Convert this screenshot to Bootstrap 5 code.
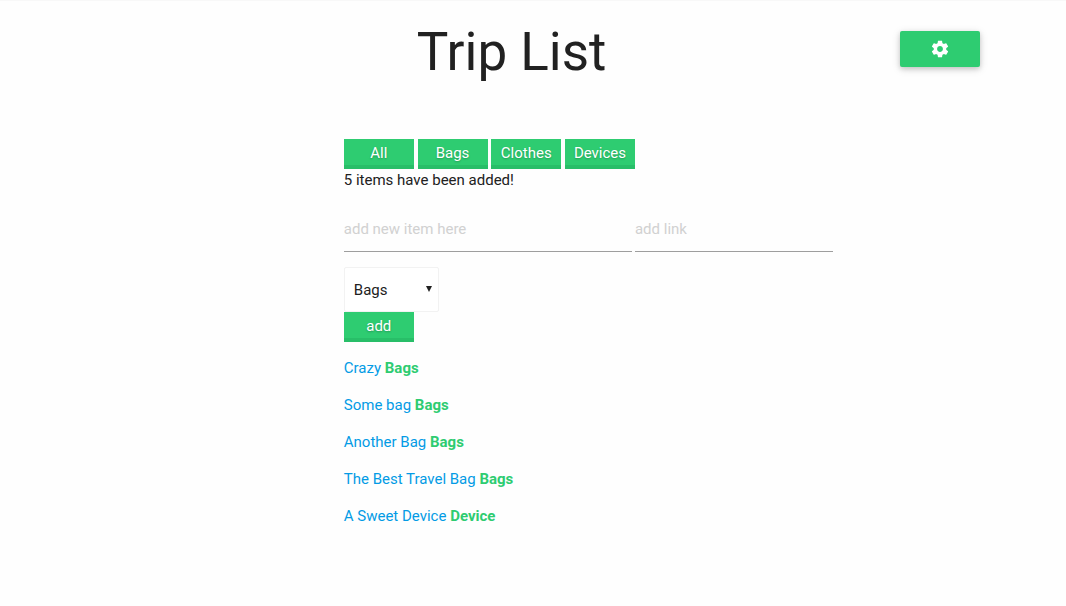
<!DOCTYPE html>
<html lang="en">
<head>
<meta charset="utf-8">
<meta name="viewport" content="width=device-width, initial-scale=1">
<title>Trip List</title>
<link href="https://cdn.jsdelivr.net/npm/bootstrap@5.3.0/dist/css/bootstrap.min.css" rel="stylesheet">
<style>
  body { font: 400 15px/22px Roboto, sans-serif; color: #212121; background: #fefefe; border-top: 1px solid #f8f8f8; }
  .page-header { padding: 21px 8.1% 0 11.6%; }
  .page-title { font-size: 53px; line-height: 60px; font-weight: 400; }
  .settings-btn {
    width: 80px; height: 36px; margin-top: 9px; border-radius: 2px; background: #2ecc71; color: #fff;
    box-shadow: 0 2px 5px 0 rgba(0,0,0,.16), 0 2px 10px 0 rgba(0,0,0,.12);
  }
  .trip-main { width: 45.9%; min-width: 300px; margin-left: 32.25%; margin-top: 57px; }
  .flat-btn {
    width: 70px; height: 30px; padding: 0 0 2px; border: 0; border-radius: 0; vertical-align: top;
    font-size: 15px; line-height: 28px; color: #fff; background: #2ecc71;
    box-shadow: inset 0 -4px 0 #28be68; text-shadow: 0 1px 2px rgba(0,0,0,.25);
  }
  .settings-btn:hover, .flat-btn:hover { background: #36d57a; color: #fff; }
  .line-input, .line-input:focus {
    height: 45px; padding: 0; border: 0; border-bottom: 1px solid #9e9e9e; border-radius: 0;
    background: transparent; box-shadow: none; font-size: 15px; color: #212121;
  }
  .line-input::placeholder { color: #d1d1d1; }
  .field-row { gap: 3px; margin-top: 16px; margin-bottom: 15px; }
  .item-field { flex: 288 1 0; }
  .link-field { flex: 198 1 0; }
  .type-select {
    width: 95px; height: 45px; padding: 2px 20px 0 9px; border: 1px solid #f2f2f2; border-radius: 2px;
    font-size: 15px; color: #212121; background-color: #fff; background-position: right 6px center; background-size: 6px 8px;
    background-image: url("data:image/svg+xml,%3Csvg xmlns='http://www.w3.org/2000/svg' viewBox='0 0 6 8'%3E%3Cpath d='M0 0h6L3 6z' fill='%23212121'/%3E%3C/svg%3E");
  }
  .trip-items { gap: 15px; margin-top: 15px; }
  .trip-items a { color: #039be5; text-decoration: none; }
  .trip-items strong { color: #2ecc71; font-weight: 700; }
</style>
</head>
<body>
<header class="page-header d-flex align-items-start">
  <h1 class="page-title flex-grow-1 text-center mb-0">Trip List</h1>
  <button type="button" class="settings-btn btn border-0 p-0 d-flex align-items-center justify-content-center" aria-label="Settings">
    <svg width="20" height="20" viewBox="0 0 24 24" fill="currentColor" aria-hidden="true"><path d="M19.43 12.98c.04-.32.07-.64.07-.98s-.03-.66-.07-.98l2.11-1.65c.19-.15.24-.42.12-.64l-2-3.46c-.12-.22-.39-.3-.61-.22l-2.49 1c-.52-.4-1.08-.73-1.69-.98l-.38-2.65C14.46 2.18 14.25 2 14 2h-4c-.25 0-.46.18-.49.42l-.38 2.65c-.61.25-1.17.59-1.69.98l-2.49-1c-.23-.09-.49 0-.61.22l-2 3.46c-.13.22-.07.49.12.64l2.11 1.65c-.04.32-.07.65-.07.98s.03.66.07.98l-2.11 1.65c-.19.15-.24.42-.12.64l2 3.46c.12.22.39.3.61.22l2.49-1c.52.4 1.08.73 1.69.98l.38 2.65c.03.24.24.42.49.42h4c.25 0 .46-.18.49-.42l.38-2.65c.61-.25 1.17-.59 1.69-.98l2.49 1c.23.09.49 0 .61-.22l2-3.46c.12-.22.07-.49-.12-.64l-2.11-1.65zM12 15.5c-1.93 0-3.5-1.57-3.5-3.5s1.57-3.5 3.5-3.5 3.5 1.57 3.5 3.5-1.57 3.5-3.5 3.5z"/></svg>
  </button>
</header>
<main class="trip-main">
  <div>
    <button type="button" class="btn flat-btn">All</button>
    <button type="button" class="btn flat-btn">Bags</button>
    <button type="button" class="btn flat-btn">Clothes</button>
    <button type="button" class="btn flat-btn">Devices</button>
  </div>
  <p class="mb-0">5 items have been added!</p>
  <form>
    <div class="field-row d-flex">
      <div class="item-field">
        <input type="text" id="item" class="form-control line-input" placeholder="add new item here" aria-label="Item">
      </div>
      <div class="link-field">
        <input type="text" id="link" class="form-control line-input" placeholder="add link" aria-label="Link">
      </div>
    </div>
    <select id="type" class="form-select type-select" aria-label="Category">
      <option selected>Bags</option>
      <option>Clothes</option>
      <option>Devices</option>
    </select>
    <button type="button" class="btn flat-btn">add</button>
  </form>
  <ul class="trip-items list-unstyled d-flex flex-column">
    <li><a href="#">Crazy</a> <strong>Bags</strong></li>
    <li><a href="#">Some bag</a> <strong>Bags</strong></li>
    <li><a href="#">Another Bag</a> <strong>Bags</strong></li>
    <li><a href="#">The Best Travel Bag</a> <strong>Bags</strong></li>
    <li><a href="#">A Sweet Device</a> <strong>Device</strong></li>
  </ul>
</main>
<script src="https://cdn.jsdelivr.net/npm/bootstrap@5.3.0/dist/js/bootstrap.bundle.min.js"></script>
</body>
</html>
